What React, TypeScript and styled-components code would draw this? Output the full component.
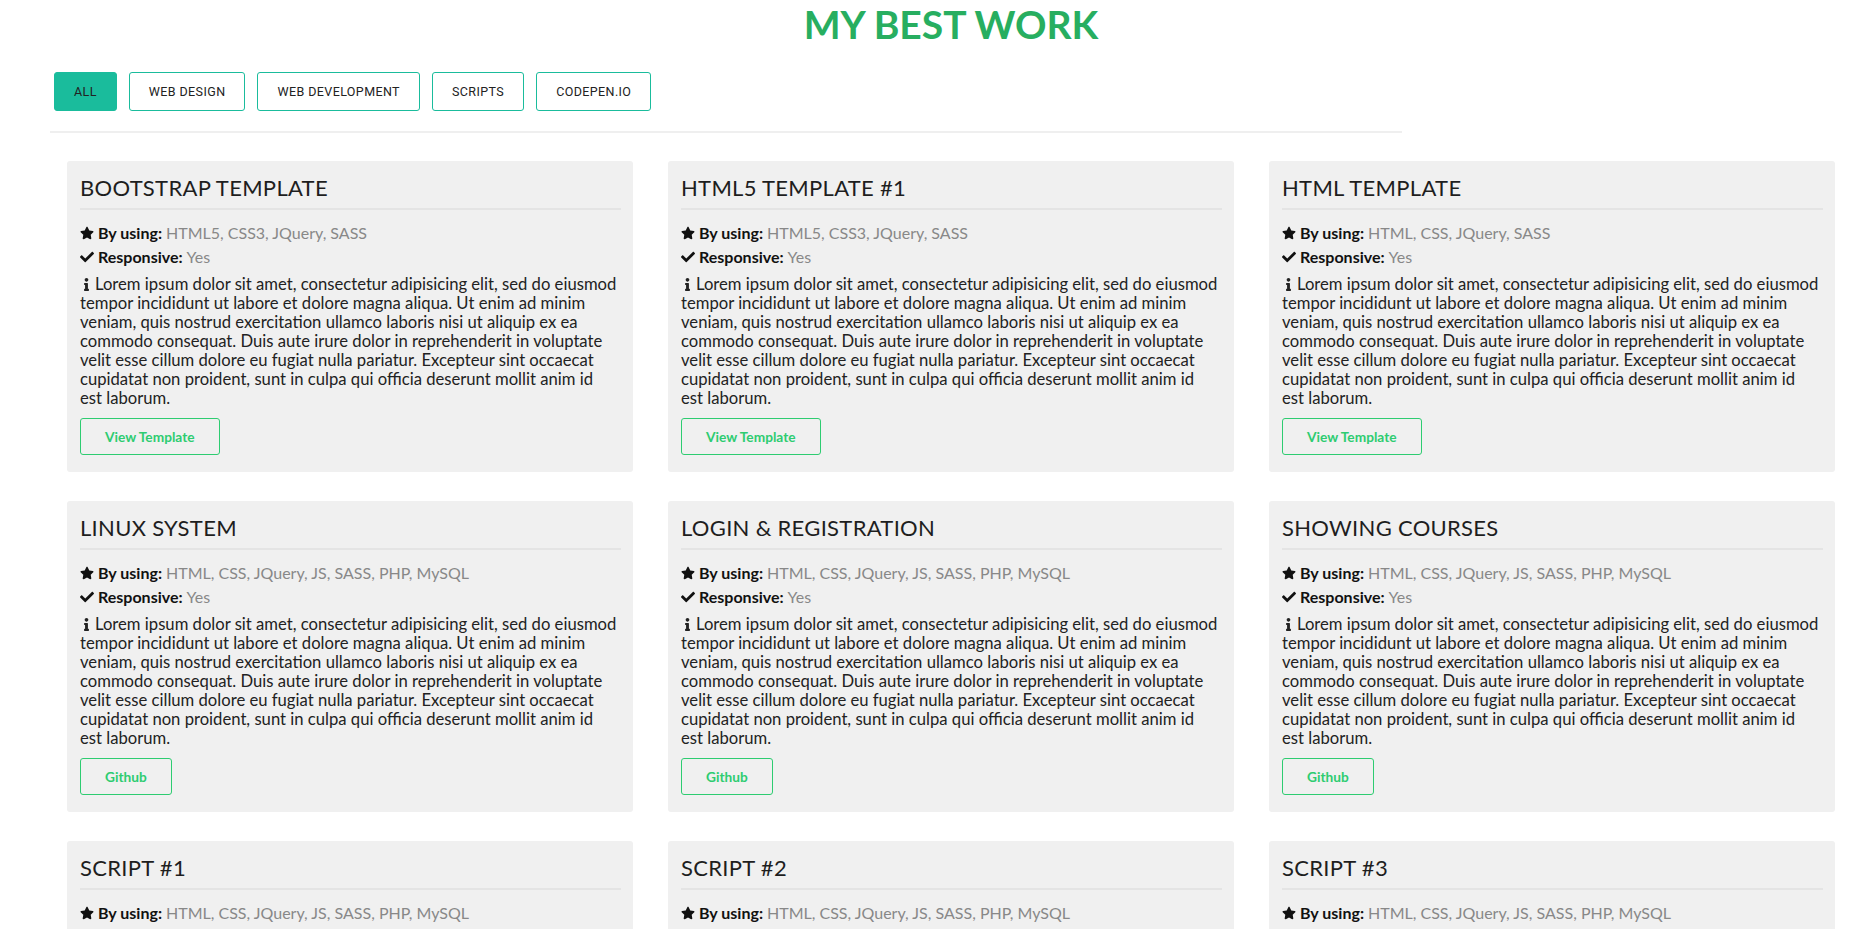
import React, { useState } from 'react';
import styled, { createGlobalStyle } from 'styled-components';
import { FaStar, FaCheck, FaInfo } from 'react-icons/fa';

const GlobalStyle = createGlobalStyle`
  html, body {
    margin: 0;
    padding: 0;
    background: #fff;
  }
  body {
    font-family: Lato, "Liberation Sans", sans-serif;
    color: #222;
  }
  * { box-sizing: border-box; }
`;

const Page = styled.div`
  padding: 0 21px 40px 50px;
`;

const Title = styled.h1`
  margin: 0;
  height: 52px;
  font-family: Lato, sans-serif;
  font-weight: 700;
  font-size: 39px;
  line-height: 48px;
  text-align: center;
  color: #27ae60;
`;

const FilterBar = styled.div`
  width: 1352px;
  padding: 20px 0 20px 4px;
  display: flex;
  gap: 12px;
  border-bottom: 2px solid #efefef;
`;

interface FilterProps {
  active: boolean;
}
const FilterButton = styled.button<FilterProps>`
  height: 39px;
  padding: 0 19px;
  font-family: Roboto, sans-serif;
  font-size: 12.5px;
  letter-spacing: 0.4px;
  text-transform: uppercase;
  color: #222;
  background: ${({ active }) => (active ? '#1abc9c' : '#fff')};
  border: 1px solid #1abc9c;
  border-radius: 3px;
  cursor: pointer;
`;

const Grid = styled.div`
  margin: 28px 0 0 17px;
  display: grid;
  grid-template-columns: repeat(3, 566px);
  column-gap: 35px;
  row-gap: 29px;
`;

const Card = styled.div`
  background: #f0f0f0;
  border-radius: 3px;
  padding: 12px 12px 17px 13px;
`;

const CardTitle = styled.h2`
  margin: 0;
  font-size: 22px;
  font-weight: 400;
  line-height: 30px;
  letter-spacing: 0.3px;
  text-transform: uppercase;
  color: #1e1e1e;
  padding-bottom: 5px;
  border-bottom: 2px solid #e4e4e4;
`;

const Meta = styled.div`
  margin-top: 11px;
`;

const MetaRow = styled.div`
  display: flex;
  align-items: center;
  font-size: 16px;
  line-height: 24px;
  svg {
    margin-right: 4px;
    font-size: 14px;
    color: #111;
  }
`;

const Label = styled.b`
  font-weight: 700;
  color: #111;
  margin-right: 4px;
`;

const Value = styled.span`
  color: #888;
`;

const Description = styled.p`
  margin: 6px 4px 0 0;
  font-size: 16.65px;
  line-height: 19px;
  color: #222;
  svg {
    font-size: 13px;
    vertical-align: -1px;
    margin-right: 2px;
  }
`;

const LinkButton = styled.a`
  display: inline-flex;
  align-items: center;
  margin-top: 10px;
  height: 37px;
  padding: 0 24px;
  border: 1px solid #2ecc71;
  border-radius: 3px;
  font-size: 13.7px;
  font-weight: 700;
  color: #2ecc71;
  text-decoration: none;
`;

const LOREM =
  'Lorem ipsum dolor sit amet, consectetur adipisicing elit, sed do eiusmod tempor incididunt ut labore et dolore magna aliqua. Ut enim ad minim veniam, quis nostrud exercitation ullamco laboris nisi ut aliquip ex ea commodo consequat. Duis aute irure dolor in reprehenderit in voluptate velit esse cillum dolore eu fugiat nulla pariatur. Excepteur sint occaecat cupidatat non proident, sunt in culpa qui officia deserunt mollit anim id est laborum.';

const FULL_STACK = 'HTML, CSS, JQuery, JS, SASS, PHP, MySQL';

const projects = [
  { title: 'Bootstrap Template', tech: 'HTML5, CSS3, JQuery, SASS', link: 'View Template' },
  { title: 'HTML5 Template #1', tech: 'HTML5, CSS3, JQuery, SASS', link: 'View Template' },
  { title: 'HTML Template', tech: 'HTML, CSS, JQuery, SASS', link: 'View Template' },
  { title: 'Linux System', tech: FULL_STACK, link: 'Github' },
  { title: 'Login & Registration', tech: FULL_STACK, link: 'Github' },
  { title: 'Showing Courses', tech: FULL_STACK, link: 'Github' },
  { title: 'Script #1', tech: FULL_STACK, link: 'Github' },
  { title: 'Script #2', tech: FULL_STACK, link: 'Github' },
  { title: 'Script #3', tech: FULL_STACK, link: 'Github' },
];

const filters = ['All', 'Web Design', 'Web Development', 'Scripts', 'Codepen.io'];

export default function App() {
  const [filter, setFilter] = useState('All');

  return (
    <Page>
      <GlobalStyle />
      <Title>MY BEST WORK</Title>
      <FilterBar>
        {filters.map((f) => (
          <FilterButton key={f} active={f === filter} onClick={() => setFilter(f)}>
            {f}
          </FilterButton>
        ))}
      </FilterBar>
      <Grid>
        {projects.map((p) => (
          <Card key={p.title}>
            <CardTitle>{p.title}</CardTitle>
            <Meta>
              <MetaRow>
                <FaStar />
                <Label>By using:</Label>
                <Value>{p.tech}</Value>
              </MetaRow>
              <MetaRow>
                <FaCheck />
                <Label>Responsive:</Label>
                <Value>Yes</Value>
              </MetaRow>
            </Meta>
            <Description>
              <FaInfo />
              {LOREM}
            </Description>
            <LinkButton href="#">{p.link}</LinkButton>
          </Card>
        ))}
      </Grid>
    </Page>
  );
}
